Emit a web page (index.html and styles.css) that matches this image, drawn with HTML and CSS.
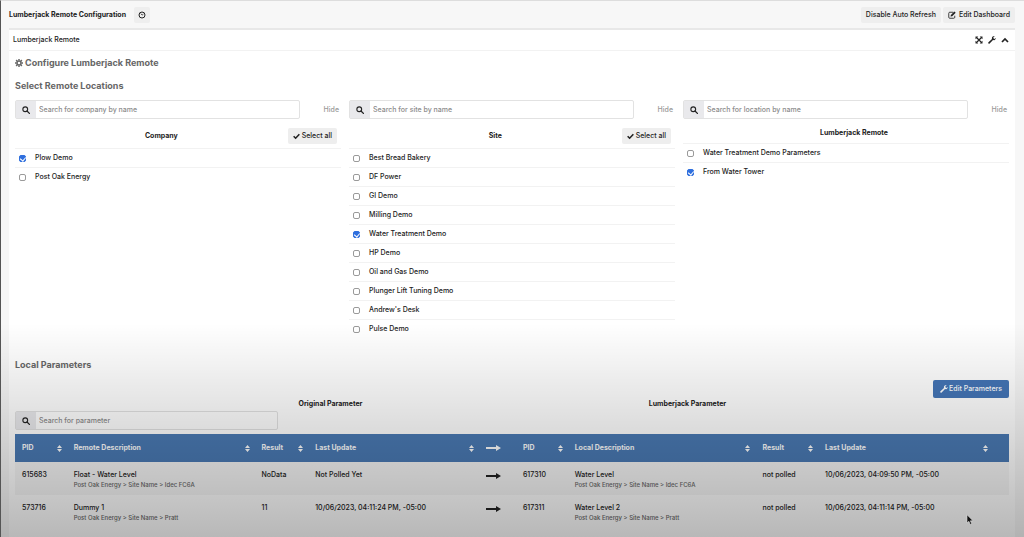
FILE: index.html
```html
<!DOCTYPE html>
<html lang="en">
<head>
    <meta charset="UTF-8">
    <meta name="viewport" content="width=device-width, initial-scale=1.0">
    <title>Lumberjack Remote Configuration</title>
    <link rel="stylesheet" href="styles.css">
</head>
<body>

    <!-- Shared icons -->
    <svg class="sprite" aria-hidden="true">
        <symbol id="search" viewBox="0 0 16 16">
            <circle cx="6.5" cy="6.5" r="4.8" fill="none" stroke="currentColor" stroke-width="2.2"/>
            <path d="M10 10l4.8 4.8" stroke="currentColor" stroke-width="2.6" stroke-linecap="round"/>
        </symbol>
        <symbol id="check" viewBox="0 0 16 16">
            <path d="M1.5 8.5l4.5 4.5L14.5 4" fill="none" stroke="currentColor" stroke-width="3.6"/>
        </symbol>
        <symbol id="wrench" viewBox="0 0 16 16">
            <path d="M15.5 4.2l-2.7 1.6-2-1.1V2.4L13.5.8C11.4 0 8.8.7 8 3c-.4 1.1-.3 2 0 2.9L.9 12.6c-.8.8-.7 1.6 0 2.3s1.600.9 2.4.1L10 8c1 .4 2.3.4 3.4-.1 1.6-.7 2.4-2.2 2.1-3.700z" fill="currentColor"/>
        </symbol>
        <symbol id="sort" viewBox="0 0 10 14">
            <path d="M5 0l5 6H0zM5 14l5-6H0z" fill="currentColor"/>
        </symbol>
        <symbol id="arrow" viewBox="0 0 30 14">
            <path d="M0 5h20V1l10 6-10 6V9H0z" fill="currentColor"/>
        </symbol>
    </svg>

    <header class="topbar">
        <h1>Lumberjack Remote Configuration</h1>
        <button type="button" class="btn btn-clock" aria-label="Time range">
            <svg class="icon" viewBox="0 0 16 16"><circle cx="8" cy="8" r="6" fill="none" stroke="currentColor" stroke-width="2"/><path d="M5.500 5l2.700 3.200L11 6" fill="none" stroke="currentColor" stroke-width="1.600"/></svg>
        </button>
        <div class="topbar-actions">
            <button type="button" class="btn">Disable Auto Refresh</button>
            <button type="button" class="btn">
                <svg class="icon" viewBox="0 0 16 16"><path d="M10.500 2.500H3.500a2 2 0 0 0-2 2v8a2 2 0 0 0 2 2h8a2 2 0 0 0 2-2V9.500" fill="none" stroke="currentColor" stroke-width="1.700"/><path d="M12.800.8l2.600 2.600-7 7-3.400.8.800-3.400z" fill="currentColor"/></svg>
                Edit Dashboard
            </button>
        </div>
    </header>

    <main class="panel">
        <div class="panel-header">
            <h2>Lumberjack Remote</h2>
            <div class="panel-tools">
                <button type="button" aria-label="Expand"><svg class="icon" viewBox="0 0 16 16"><path d="M3 3l10 10M13 3L3 13" stroke="currentColor" stroke-width="2.400"/><path d="M1 1h5.500L1 6.500zM15 1v5.500L9.500 1zM1 15V9.500L6.500 15zM15 15H9.500L15 9.500z" fill="currentColor"/></svg></button>
                <button type="button" aria-label="Settings"><svg class="icon"><use href="#wrench"/></svg></button>
                <button type="button" aria-label="Collapse"><svg class="icon" viewBox="0 0 16 16"><path d="M2 12l6-6 6 6" fill="none" stroke="currentColor" stroke-width="3.400"/></svg></button>
            </div>
        </div>

        <div class="panel-body">
            <h3>
                <svg class="icon icon-gear" viewBox="0 0 16 16"><circle cx="8" cy="8" r="4" fill="none" stroke="currentColor" stroke-width="3"/><path d="M8 0v3M8 13v3M0 8h3M13 8h3M2.300 2.300l2.200 2.200M11.500 11.500l2.200 2.200M2.300 13.700l2.200-2.200M11.500 4.500l2.200-2.200" stroke="currentColor" stroke-width="3"/></svg>
                Configure Lumberjack Remote
            </h3>
            <h3>Select Remote Locations</h3>

            <div class="locations">
                <section>
                    <div class="search-row">
                        <div class="search">
                            <label for="company"><svg class="icon"><use href="#search"/></svg></label>
                            <input id="company" type="text" placeholder="Search for company by name" aria-label="Search for company by name">
                        </div>
                        <a href="#">Hide</a>
                    </div>
                    <div class="list-header">
                        <h4>Company</h4>
                        <button type="button" class="btn"><svg class="icon"><use href="#check"/></svg>Select all</button>
                    </div>
                    <ul>
                        <li><label><input type="checkbox" checked>Plow Demo</label></li>
                        <li><label><input type="checkbox">Post Oak Energy</label></li>
                    </ul>
                </section>

                <section>
                    <div class="search-row">
                        <div class="search">
                            <label for="site"><svg class="icon"><use href="#search"/></svg></label>
                            <input id="site" type="text" placeholder="Search for site by name" aria-label="Search for site by name">
                        </div>
                        <a href="#">Hide</a>
                    </div>
                    <div class="list-header">
                        <h4>Site</h4>
                        <button type="button" class="btn"><svg class="icon"><use href="#check"/></svg>Select all</button>
                    </div>
                    <ul>
                        <li><label><input type="checkbox">Best Bread Bakery</label></li>
                        <li><label><input type="checkbox">DF Power</label></li>
                        <li><label><input type="checkbox">GI Demo</label></li>
                        <li><label><input type="checkbox">Milling Demo</label></li>
                        <li><label><input type="checkbox" checked>Water Treatment Demo</label></li>
                        <li><label><input type="checkbox">HP Demo</label></li>
                        <li><label><input type="checkbox">Oil and Gas Demo</label></li>
                        <li><label><input type="checkbox">Plunger Lift Tuning Demo</label></li>
                        <li><label><input type="checkbox">Andrew's Desk</label></li>
                        <li><label><input type="checkbox">Pulse Demo</label></li>
                    </ul>
                </section>

                <section>
                    <div class="search-row">
                        <div class="search">
                            <label for="location"><svg class="icon"><use href="#search"/></svg></label>
                            <input id="location" type="text" placeholder="Search for location by name" aria-label="Search for location by name">
                        </div>
                        <a href="#">Hide</a>
                    </div>
                    <div class="list-header list-header-short">
                        <h4>Lumberjack Remote</h4>
                    </div>
                    <ul>
                        <li><label><input type="checkbox">Water Treatment Demo Parameters</label></li>
                        <li><label><input type="checkbox" checked>From Water Tower</label></li>
                    </ul>
                </section>
            </div>

            <h3 class="local-title">Local Parameters</h3>
            <div class="edit-row">
                <button type="button" class="btn-primary"><svg class="icon"><use href="#wrench"/></svg>Edit Parameters</button>
            </div>
            <div class="group-titles">
                <h4>Original Parameter</h4>
                <h4>Lumberjack Parameter</h4>
            </div>
            <div class="search search-parameter">
                <label for="parameter"><svg class="icon"><use href="#search"/></svg></label>
                <input id="parameter" type="text" placeholder="Search for parameter" aria-label="Search for parameter">
            </div>

            <table>
                <colgroup>
                    <col class="col-pid"><col class="col-desc"><col class="col-result"><col class="col-update">
                    <col class="col-arrow">
                    <col class="col-pid"><col class="col-desc"><col class="col-local-result"><col class="col-local-update">
                    <col class="col-end">
                </colgroup>
                <thead>
                    <tr>
                        <th><div>PID<svg><use href="#sort"/></svg></div></th>
                        <th><div>Remote Description<svg><use href="#sort"/></svg></div></th>
                        <th><div>Result<svg><use href="#sort"/></svg></div></th>
                        <th><div>Last Update<svg><use href="#sort"/></svg></div></th>
                        <th><svg class="arrow"><use href="#arrow"/></svg></th>
                        <th><div>PID<svg><use href="#sort"/></svg></div></th>
                        <th><div>Local Description<svg><use href="#sort"/></svg></div></th>
                        <th><div>Result<svg><use href="#sort"/></svg></div></th>
                        <th><div>Last Update<svg><use href="#sort"/></svg></div></th>
                        <th></th>
                    </tr>
                </thead>
                <tbody>
                    <tr>
                        <td>615683</td>
                        <td>Float - Water Level<small>Post Oak Energy &gt; Site Name &gt; Idec FC6A</small></td>
                        <td>NoData</td>
                        <td>Not Polled Yet</td>
                        <td><svg class="arrow"><use href="#arrow"/></svg></td>
                        <td>617310</td>
                        <td>Water Level<small>Post Oak Energy &gt; Site Name &gt; Idec FC6A</small></td>
                        <td>not polled</td>
                        <td>10/06/2023, 04:09:50 PM, -05:00</td>
                        <td></td>
                    </tr>
                    <tr>
                        <td>573716</td>
                        <td>Dummy 1<small>Post Oak Energy &gt; Site Name &gt; Pratt</small></td>
                        <td>11</td>
                        <td>10/06/2023, 04:11:24 PM, -05:00</td>
                        <td><svg class="arrow"><use href="#arrow"/></svg></td>
                        <td>617311</td>
                        <td>Water Level 2<small>Post Oak Energy &gt; Site Name &gt; Pratt</small></td>
                        <td>not polled</td>
                        <td>10/06/2023, 04:11:14 PM, -05:00</td>
                        <td></td>
                    </tr>
                </tbody>
            </table>
        </div>
    </main>

    <div class="shade"></div>
    <svg class="pointer" viewBox="0 0 10 16"><path d="M1 1v11l2.500-2.300L5.300 14l2-.9-1.800-4H9z" fill="#111" stroke="#ddd" stroke-width=".8"/></svg>

</body>
</html>
```
FILE: styles.css
```css
* {
    box-sizing: border-box;
}

body {
    margin: 0;
    min-height: 100vh;
    display: flex;
    flex-direction: column;
    position: relative;
    padding: 0 9px 0 8px;
    border-left: 1px solid #555;
    border-top: 1px solid #ddd;
    background: #f7f7f7;
    color: #222;
    font-family: Inter, sans-serif;
    font-size: 7px;
    font-weight: 500;
    line-height: 10px;
}

h1, h2, h3, h4, ul {
    margin: 0;
    padding: 0;
}

button, input {
    font: inherit;
    color: inherit;
}

button {
    border: none;
    padding: 0;
    cursor: pointer;
}

.sprite {
    position: absolute;
    width: 0;
    height: 0;
}

.icon {
    width: 8px;
    height: 8px;
    flex: none;
}

/* Top bar */
.topbar {
    display: flex;
    align-items: center;
    height: 29px;
    border-bottom: 2px solid #e8e8e8;
}

h1 {
    font-size: 7px;
    font-weight: 700;
}

.btn {
    display: flex;
    align-items: center;
    gap: 3px;
    height: 16px;
    padding: 0 5px;
    background: #eeeeee;
    border-radius: 2px;
}

.btn-clock {
    margin-left: 8px;
    padding: 0 4px;
}

.topbar-actions {
    display: flex;
    gap: 2px;
    margin-left: auto;
}

/* Panel */
.panel {
    flex: 1;
    background: #fff;
}

.panel-header {
    display: flex;
    align-items: center;
    justify-content: space-between;
    height: 21px;
    padding: 0 6px 0 4px;
    border-bottom: 1px solid #f2f2f2;
}

h2 {
    font-size: 7px;
    font-weight: 500;
}

.panel-tools {
    display: flex;
    gap: 5px;
}

.panel-tools button {
    display: flex;
    background: none;
}

.panel-body {
    padding: 0 6px;
}

h3 {
    display: flex;
    align-items: center;
    gap: 2px;
    height: 23px;
    color: #666;
    font-size: 9px;
    font-weight: 700;
}

h4 {
    font-size: 7px;
    font-weight: 700;
    text-align: center;
}

/* Location pickers */
.locations {
    display: grid;
    grid-template-columns: repeat(3, 1fr);
    gap: 8px;
    padding-top: 3px;
}

.search-row {
    display: flex;
    align-items: center;
    justify-content: space-between;
    padding-right: 2px;
}

.search-row .search {
    width: 88%;
}

.search-row a {
    color: #999;
    text-decoration: none;
}

.search {
    display: flex;
    height: 19px;
    border: 1px solid #e2e2e2;
    border-radius: 2px;
}

.search label {
    display: flex;
    align-items: center;
    justify-content: center;
    width: 20px;
    background: #e9e9ec;
}

.search input {
    flex: 1;
    min-width: 0;
    padding: 0 3px;
    border: none;
    background: none;
    outline: none;
}

.search input::placeholder {
    color: #8c8c8c;
}

.list-header {
    display: flex;
    align-items: center;
    height: 30px;
    padding: 4px 4px 0 20px;
    border-bottom: 1px solid #f2f2f2;
}

.list-header-short {
    height: 25px;
}

.list-header h4 {
    flex: 1;
}

.list-header .btn {
    gap: 2px;
}

.list-header .icon {
    width: 7px;
}

li {
    list-style: none;
    border-bottom: 1px solid #f2f2f2;
}

li:last-child {
    border-bottom: none;
}

li label {
    display: flex;
    align-items: center;
    gap: 9px;
    height: 18px;
    padding-left: 4px;
}

input[type="checkbox"] {
    appearance: none;
    position: relative;
    width: 7px;
    height: 7px;
    margin: 0;
    border: 1px solid #9a9a9a;
    border-radius: 2px;
    background: #fff;
}

input[type="checkbox"]:checked {
    border-color: #2f6fde;
    background: #2f6fde;
}

input[type="checkbox"]:checked::after {
    content: "";
    position: absolute;
    left: 1px;
    top: 0;
    width: 3px;
    height: 4px;
    border: solid #fff;
    border-width: 0 1px 1px 0;
    transform: rotate(40deg);
}

/* Local parameters */
.local-title {
    margin-top: 15px;
}

.edit-row {
    display: flex;
    justify-content: flex-end;
    margin-top: 4px;
}

.btn-primary {
    display: flex;
    align-items: center;
    gap: 1px;
    height: 18px;
    padding: 0 7px;
    border-radius: 2px;
    background: #4475b6;
    color: #fff;
}

.group-titles {
    display: grid;
    grid-template-columns: 137fr 357fr 357fr 143fr;
    padding-top: 1px;
}

.group-titles h4:first-child {
    grid-column: 2;
}

.search-parameter {
    width: 26.5%;
    margin: 2px 0 4px;
}

table {
    width: 100%;
    table-layout: fixed;
    border-collapse: collapse;
}

.col-pid { width: 5.2%; }
.col-desc { width: 18.9%; }
.col-result { width: 5.4%; }
.col-update { width: 17.2%; }
.col-arrow { width: 3.7%; }
.col-local-result { width: 6.3%; }
.col-local-update { width: 17.6%; }
.col-end { width: 1.6%; }

th, td {
    padding: 0 0 0 7px;
    text-align: left;
    white-space: nowrap;
}

th {
    height: 28px;
    background: #4a7ab4;
    color: #fff;
    font-weight: 700;
}

th div {
    display: flex;
    align-items: center;
    justify-content: space-between;
    padding-right: 5px;
}

th div svg {
    width: 5px;
    height: 7px;
}

td {
    height: 33px;
    padding-top: 8px;
    vertical-align: top;
}

tbody tr:first-child {
    background: #f6f6f6;
}

small {
    display: block;
    color: #666;
    font-size: 6px;
}

.arrow {
    display: block;
    width: 15px;
    height: 8px;
}

td .arrow {
    margin-top: 2px;
}

/* Darkening towards the bottom of the page */
.shade {
    position: absolute;
    inset: 60% 0 0;
    background: linear-gradient(rgba(0, 0, 0, 0), rgba(0, 0, 0, 0.28));
    pointer-events: none;
}

.pointer {
    position: absolute;
    left: 965px;
    top: 513px;
    width: 8px;
    height: 12px;
}
```
